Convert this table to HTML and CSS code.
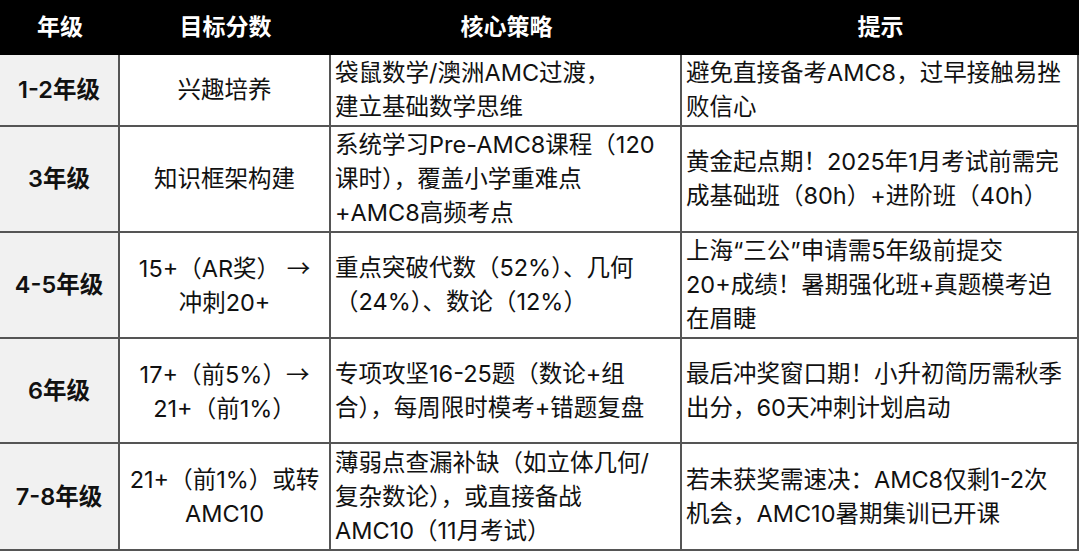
FILE: index.html
```html
<!DOCTYPE html>
<html lang="zh-CN">
<head>
<meta charset="utf-8">
<link rel="stylesheet" href="styles.css">
</head>
<body>
<div class="table">
  <div class="cell head">年级</div>
  <div class="cell head">目标分数</div>
  <div class="cell head">核心策略</div>
  <div class="cell head">提示</div>

  <div class="cell grade">1-2年级</div>
  <div class="cell goal"><p class="in">兴趣培养</p></div>
  <div class="cell text"><p class="in">袋鼠数学/澳洲AMC过渡，<br>建立基础数学思维</p></div>
  <div class="cell text"><p class="in">避免直接备考AMC8，过早接触易挫<br>败信心</p></div>

  <div class="cell grade">3年级</div>
  <div class="cell goal"><p class="in">知识框架构建</p></div>
  <div class="cell text"><p class="in">系统学习Pre-AMC8课程（120<br>课时），覆盖小学重难点<br>+AMC8高频考点</p></div>
  <div class="cell text"><p class="in">黄金起点期！2025年1月考试前需完<br>成基础班（80h）+进阶班（40h）</p></div>

  <div class="cell grade">4-5年级</div>
  <div class="cell goal"><p class="in">15+（AR奖） <span class="arrow">→</span><br>冲刺20+</p></div>
  <div class="cell text"><p class="in">重点突破代数（52%）、几何<br>（24%）、数论（12%）</p></div>
  <div class="cell text"><p class="in">上海“三公”申请需5年级前提交<br>20+成绩！暑期强化班+真题模考迫<br>在眉睫</p></div>

  <div class="cell grade">6年级</div>
  <div class="cell goal"><p class="in">17+（前5%）<span class="arrow">→</span><br>21+（前1%）</p></div>
  <div class="cell text"><p class="in">专项攻坚16-25题（数论+组<br>合），每周限时模考+错题复盘</p></div>
  <div class="cell text"><p class="in">最后冲奖窗口期！小升初简历需秋季<br>出分，60天冲刺计划启动</p></div>

  <div class="cell grade">7-8年级</div>
  <div class="cell goal"><p class="in">21+（前1%）或转<br>AMC10</p></div>
  <div class="cell text"><p class="in">薄弱点查漏补缺（如立体几何/<br>复杂数论），或直接备战<br>AMC10（11月考试）</p></div>
  <div class="cell text"><p class="in">若未获奖需速决：AMC8仅剩1-2次<br>机会，AMC10暑期集训已开课</p></div>
</div>
</body>
</html>
```

FILE: styles.css
```css
html, body {
  margin: 0;
  padding: 0;
  background: #ffffff;
}

body {
  font-family: "Inter", "Noto Sans CJK SC", sans-serif;
  color: #111111;
  width: 1080px;
  height: 552px;
  overflow: hidden;
}

.table {
  display: grid;
  grid-template-columns: 120px 211px 351px 397px;
  grid-template-rows: 55px 72px 106px 106px 105px 107px;
  width: 1079px;
}

.cell {
  box-sizing: border-box;
  display: flex;
  align-items: center;
  font-size: 23.5px;
  line-height: 34px;
  white-space: nowrap;
  border-right: 2px solid #555555;
  border-bottom: 2px solid #555555;
}

.in {
  margin: 0;
}

.head {
  background: #000000;
  color: #ffffff;
  font-weight: 600;
  justify-content: center;
  border: none;
  font-size: 23px;
  padding-bottom: 2px;
}

.grade {
  background: #f1f1f1;
  font-weight: 600;
  justify-content: center;
}

.goal {
  justify-content: center;
  text-align: center;
}

.text {
  justify-content: flex-start;
  padding-left: 4px;
}

.arrow {
  font-family: "Noto Sans CJK SC", sans-serif;
}
```
